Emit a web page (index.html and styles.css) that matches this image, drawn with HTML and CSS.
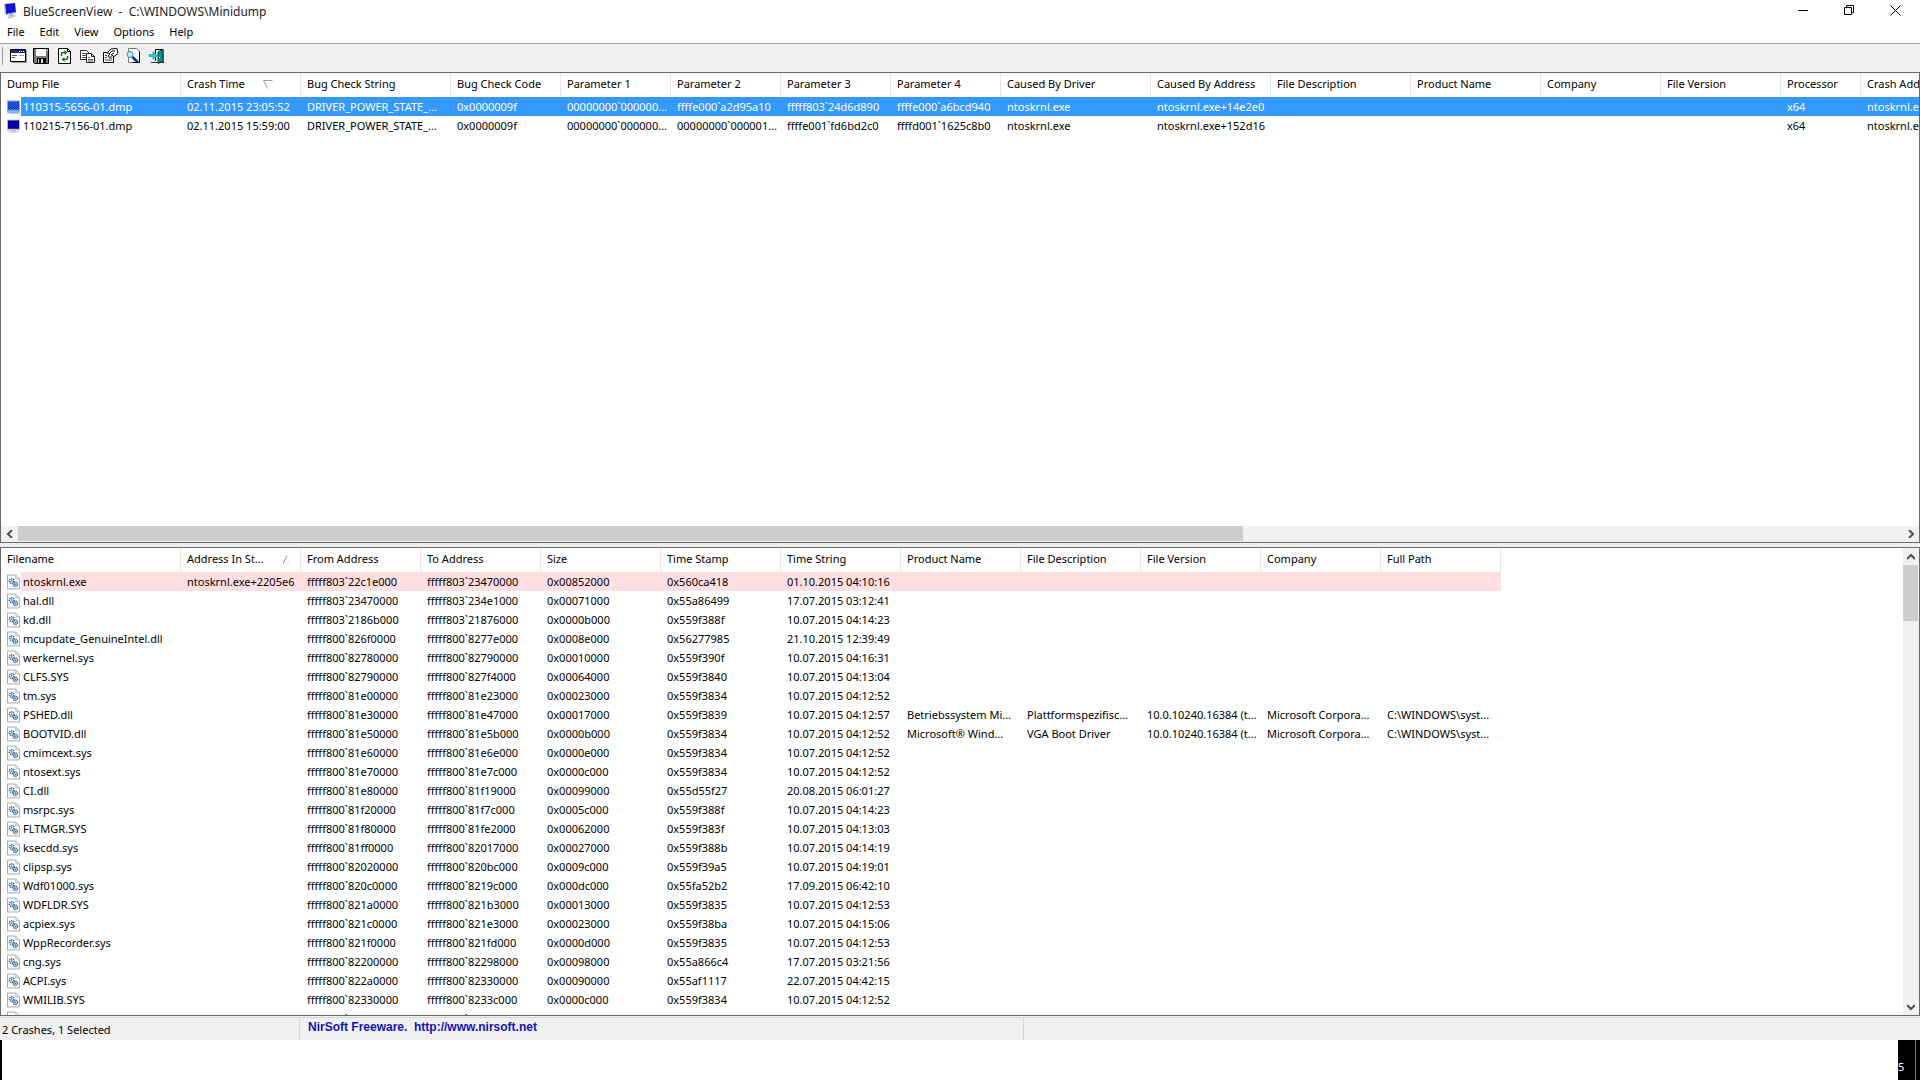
FILE: index.html
```html
<!DOCTYPE html>
<html lang="en">
<head>
<meta charset="utf-8">
<title>BlueScreenView - C:\WINDOWS\Minidump</title>
<link rel="stylesheet" href="styles.css">
</head>
<body>
<svg class="sprite" aria-hidden="true">
  <defs>
    <pattern id="dither" width="2" height="2" patternUnits="userSpaceOnUse"><path d="M0 0h1v1h-1zM1 1h1v1h-1z" fill="#39f"/></pattern>
    <symbol id="monitor" viewBox="0 0 14 16">
      <path d="M0 1h14v12H0z" fill="#c4c6cc"/><path d="M1 2h12v9H1z" fill="#00009c"/>
      <path d="M5 13h4v1H5z" fill="#9a9ca2"/><path d="M2 14h10v1H2z" fill="#b8bac0"/>
    </symbol>
    <symbol id="dll" viewBox="0 0 14 16">
      <path d="M.5.5h9l4 4v11H.5z" fill="#fbfcfd" stroke="#a3a3a3"/><path d="M9.500.5v4h4" fill="#e4e4e4" stroke="#b9b9b9"/>
      <circle cx="5" cy="7" r="2.500" fill="#dbe8f4" stroke="#3a6d9e" stroke-width="1.500" stroke-dasharray="1.300 .7"/><circle cx="5" cy="7" r=".8" fill="#3a6d9e"/>
      <circle cx="9" cy="10.500" r="2.300" fill="#dbe8f4" stroke="#2f6191" stroke-width="1.500" stroke-dasharray="1.300 .7"/><circle cx="9" cy="10.500" r=".8" fill="#2f6191"/>
    </symbol>
  </defs>
</svg>

<header class="titlebar">
  <svg class="app-icon" viewBox="0 0 16 16"><path d="M3 1l10-1 1 9-10 2z" fill="#1212d8"/><path d="M2 2l1-1 1 10-1 1z" fill="#b4b6cc"/><path d="M4 11l10-2v1l-9 2z" fill="#8e92c4"/><path d="M7 12l4-1 1 2-4 1z" fill="#a8aab4"/><path d="M5 14l8-2 1 1-7 3z" fill="#c4c6cc"/></svg>
  <h1>BlueScreenView  -  C:\WINDOWS\Minidump</h1>
  <div class="window-buttons">
    <button aria-label="Minimize"><svg viewBox="0 0 11 11"><path d="M0 5.500h10" stroke="#000"/></svg></button>
    <button aria-label="Restore"><svg viewBox="0 0 11 11"><path d="M.5 2.500h7v7h-7zM2.500 2.500v-2h7v7h-2" fill="none" stroke="#000"/></svg></button>
    <button aria-label="Close"><svg viewBox="0 0 11 11"><path d="M.5.5l10 10M10.500.5l-10 10" stroke="#000"/></svg></button>
  </div>
</header>

<nav class="menubar">
  <button>File</button><button>Edit</button><button>View</button><button>Options</button><button>Help</button>
</nav>

<div class="toolbar" role="toolbar">
  <button aria-label="Advanced options"><svg viewBox="0 0 17 16"><path d="M.5 1.500h15v12H.5z" fill="#fff" stroke="#000"/><path d="M1 2h14v3H1z" fill="#23238a"/><path d="M9 3h1v1H9zM11 3h1v1h-1zM13 3h1v1h-1z" fill="#fff"/><path d="M2 7.500h5M2 9.500h3" stroke="#555"/><path d="M9 7.500h5" stroke="#999"/><path d="M16.500 3v12M2 14.500h15" stroke="#999"/></svg></button>
  <button aria-label="Save"><svg viewBox="0 0 17 16"><path d="M.5.5h15v15h-14l-1-1z" fill="#777" stroke="#000"/><path d="M3 1h10v7H3z" fill="#fff"/><path d="M4 10h9v5H4z" fill="#000"/><path d="M5 11h5v4H5z" fill="#ddd"/><path d="M6 11h2v4H6z" fill="#000"/><path d="M14 2h1v1h-1z" fill="#fff"/></svg></button>
  <button aria-label="Refresh"><svg viewBox="0 0 17 16"><path d="M2.500.5h9l3 3v12h-12z" fill="#fff" stroke="#000"/><path d="M11.500.5v3h3" fill="none" stroke="#000"/><path d="M5.500 8V6q0-1.500 2-1.500h2M11.500 8v2q0 1.500-2 1.500h-2" fill="none" stroke="#087a18" stroke-width="1.500"/><path d="M8.500 2l3 2.500-3 2.500zM8.500 9l-3 2.500 3 2.500z" fill="#087a18"/></svg></button>
  <button aria-label="Copy"><svg viewBox="0 0 17 16"><path d="M1.500 2.500h6l3 3v6h-9z" fill="#fff" stroke="#333"/><path d="M3 5.500h4M3 7.500h4M3 9.500h4" stroke="#555"/><path d="M7.500 5.500h5l3 3v6h-8z" fill="#fff" stroke="#222"/><path d="M12.500 5.500v3h3" fill="none" stroke="#222"/><path d="M9 9.500h2M9 11.500h5M9 13h5" stroke="#555"/></svg></button>
  <button aria-label="Properties"><svg viewBox="0 0 17 16"><path d="M1.500 4.500h10v10h-10z" fill="#fff" stroke="#000"/><path d="M5 5l4-4 6-.5 1 5-4 3-2-1-2 2-2-1 2-3z" fill="#fff" stroke="#000"/><path d="M7 6l3-3h3M9 7l3-2" fill="none" stroke="#000"/><path d="M3 7.500h2M3 9.500h2M7 10h3M3 12h7" stroke="#333"/></svg></button>
  <button aria-label="Find"><svg viewBox="0 0 17 16"><path d="M3.500.5h8l3 3v11h-11z" fill="#fff" stroke="#777"/><path d="M14.500 3.500v11h-7" fill="none" stroke="#000"/><circle cx="5" cy="6.500" r="3" fill="#aef2f2" stroke="#498b9e"/><path d="M7.500 9l5.500 5.500" stroke="#0b2c9c" stroke-width="2.500"/></svg></button>
  <button aria-label="Exit"><svg viewBox="0 0 17 16"><path d="M7.500 13V1.500h7.500V14" fill="#fff" stroke="#000"/><path d="M10 4l5-2.500V13l-5 2.500z" fill="#128a8a" stroke="#063f3f"/><path d="M11 9h1v1h-1z" fill="#fff"/><path d="M1 6.500h4V3.500l4.500 4-4.500 4v-3H1z" fill="#17cfd6" stroke="#0c8f98" stroke-width=".6"/><path d="M3 14.500h13" stroke="#333"/></svg></button>
</div>

<main class="panes">
<section class="pane pane-crashes">
  <div class="list">
  <table class="crashes">
    <colgroup><col class="w180"><col class="w120"><col class="w150"><col class="w110"><col class="w110"><col class="w110"><col class="w110"><col class="w110"><col class="w150"><col class="w120"><col class="w140"><col class="w130"><col class="w120"><col class="w120"><col class="w80"><col class="w120"></colgroup>
    <thead><tr><th>Dump File<th><div class="sorted">Crash Time <svg viewBox="0 0 10 9"><path d="M9.500.5H.5l4 8" fill="none" stroke="#a0a0a0"/></svg></div><th>Bug Check String<th>Bug Check Code<th>Parameter 1<th>Parameter 2<th>Parameter 3<th>Parameter 4<th>Caused By Driver<th>Caused By Address<th>File Description<th>Product Name<th>Company<th>File Version<th>Processor<th>Crash Address</tr></thead>
    <tbody>
    <tr class="selected"><td><div class="name"><svg viewBox="0 0 14 16"><use href="#monitor"/><path d="M0 1h14v14H0z" fill="url(#dither)"/></svg>110315-5656-01.dmp</div><td>02.11.2015 23:05:52<td>DRIVER_POWER_STATE_...<td>0x0000009f<td>00000000`000000...<td>ffffe000`a2d95a10<td>fffff803`24d6d890<td>ffffe000`a6bcd940<td>ntoskrnl.exe<td>ntoskrnl.exe+14e2e0<td><td><td><td><td>x64<td>ntoskrnl.exe+14e2e0</tr>
    <tr><td><div class="name"><svg><use href="#monitor"/></svg>110215-7156-01.dmp</div><td>02.11.2015 15:59:00<td>DRIVER_POWER_STATE_...<td>0x0000009f<td>00000000`000000...<td>00000000`000001...<td>ffffe001`fd6bd2c0<td>ffffd001`1625c8b0<td>ntoskrnl.exe<td>ntoskrnl.exe+152d16<td><td><td><td><td>x64<td>ntoskrnl.exe+152d16</tr>
    </tbody>
  </table>
  </div>
  <div class="hscroll">
    <button aria-label="Scroll left"><svg viewBox="0 0 8 8"><path d="M6 0L2 4l4 4" fill="none" stroke="#505050" stroke-width="2"/></svg></button>
    <div class="track"><div class="thumb"></div></div>
    <button aria-label="Scroll right"><svg viewBox="0 0 8 8"><path d="M2 0l4 4-4 4" fill="none" stroke="#505050" stroke-width="2"/></svg></button>
  </div>
</section>

<section class="pane pane-drivers">
  <div class="list">
  <table class="drivers">
    <colgroup><col class="w180"><col class="w120" span="11"></colgroup>
    <thead><tr><th>Filename<th><div class="sorted">Address In St... <svg viewBox="0 0 10 9"><path d="M3 8.500L7 .5" fill="none" stroke="#909090"/><path d="M7 1l2 7H4" fill="none" stroke="#eee"/></svg></div><th>From Address<th>To Address<th>Size<th>Time Stamp<th>Time String<th>Product Name<th>File Description<th>File Version<th>Company<th>Full Path</tr></thead>
    <tbody>
    <tr class="in-stack"><td><div class="name"><svg><use href="#dll"/></svg>ntoskrnl.exe</div><td>ntoskrnl.exe+2205e6<td>fffff803`22c1e000<td>fffff803`23470000<td>0x00852000<td>0x560ca418<td>01.10.2015 04:10:16<td><td><td><td><td></tr>
    <tr><td><div class="name"><svg><use href="#dll"/></svg>hal.dll</div><td><td>fffff803`23470000<td>fffff803`234e1000<td>0x00071000<td>0x55a86499<td>17.07.2015 03:12:41<td><td><td><td><td></tr>
    <tr><td><div class="name"><svg><use href="#dll"/></svg>kd.dll</div><td><td>fffff803`2186b000<td>fffff803`21876000<td>0x0000b000<td>0x559f388f<td>10.07.2015 04:14:23<td><td><td><td><td></tr>
    <tr><td><div class="name"><svg><use href="#dll"/></svg>mcupdate_GenuineIntel.dll</div><td><td>fffff800`826f0000<td>fffff800`8277e000<td>0x0008e000<td>0x56277985<td>21.10.2015 12:39:49<td><td><td><td><td></tr>
    <tr><td><div class="name"><svg><use href="#dll"/></svg>werkernel.sys</div><td><td>fffff800`82780000<td>fffff800`82790000<td>0x00010000<td>0x559f390f<td>10.07.2015 04:16:31<td><td><td><td><td></tr>
    <tr><td><div class="name"><svg><use href="#dll"/></svg>CLFS.SYS</div><td><td>fffff800`82790000<td>fffff800`827f4000<td>0x00064000<td>0x559f3840<td>10.07.2015 04:13:04<td><td><td><td><td></tr>
    <tr><td><div class="name"><svg><use href="#dll"/></svg>tm.sys</div><td><td>fffff800`81e00000<td>fffff800`81e23000<td>0x00023000<td>0x559f3834<td>10.07.2015 04:12:52<td><td><td><td><td></tr>
    <tr><td><div class="name"><svg><use href="#dll"/></svg>PSHED.dll</div><td><td>fffff800`81e30000<td>fffff800`81e47000<td>0x00017000<td>0x559f3839<td>10.07.2015 04:12:57<td>Betriebssystem Mi...<td>Plattformspezifisc...<td>10.0.10240.16384 (t...<td>Microsoft Corpora...<td>C:\WINDOWS\syst...</tr>
    <tr><td><div class="name"><svg><use href="#dll"/></svg>BOOTVID.dll</div><td><td>fffff800`81e50000<td>fffff800`81e5b000<td>0x0000b000<td>0x559f3834<td>10.07.2015 04:12:52<td>Microsoft® Wind...<td>VGA Boot Driver<td>10.0.10240.16384 (t...<td>Microsoft Corpora...<td>C:\WINDOWS\syst...</tr>
    <tr><td><div class="name"><svg><use href="#dll"/></svg>cmimcext.sys</div><td><td>fffff800`81e60000<td>fffff800`81e6e000<td>0x0000e000<td>0x559f3834<td>10.07.2015 04:12:52<td><td><td><td><td></tr>
    <tr><td><div class="name"><svg><use href="#dll"/></svg>ntosext.sys</div><td><td>fffff800`81e70000<td>fffff800`81e7c000<td>0x0000c000<td>0x559f3834<td>10.07.2015 04:12:52<td><td><td><td><td></tr>
    <tr><td><div class="name"><svg><use href="#dll"/></svg>CI.dll</div><td><td>fffff800`81e80000<td>fffff800`81f19000<td>0x00099000<td>0x55d55f27<td>20.08.2015 06:01:27<td><td><td><td><td></tr>
    <tr><td><div class="name"><svg><use href="#dll"/></svg>msrpc.sys</div><td><td>fffff800`81f20000<td>fffff800`81f7c000<td>0x0005c000<td>0x559f388f<td>10.07.2015 04:14:23<td><td><td><td><td></tr>
    <tr><td><div class="name"><svg><use href="#dll"/></svg>FLTMGR.SYS</div><td><td>fffff800`81f80000<td>fffff800`81fe2000<td>0x00062000<td>0x559f383f<td>10.07.2015 04:13:03<td><td><td><td><td></tr>
    <tr><td><div class="name"><svg><use href="#dll"/></svg>ksecdd.sys</div><td><td>fffff800`81ff0000<td>fffff800`82017000<td>0x00027000<td>0x559f388b<td>10.07.2015 04:14:19<td><td><td><td><td></tr>
    <tr><td><div class="name"><svg><use href="#dll"/></svg>clipsp.sys</div><td><td>fffff800`82020000<td>fffff800`820bc000<td>0x0009c000<td>0x559f39a5<td>10.07.2015 04:19:01<td><td><td><td><td></tr>
    <tr><td><div class="name"><svg><use href="#dll"/></svg>Wdf01000.sys</div><td><td>fffff800`820c0000<td>fffff800`8219c000<td>0x000dc000<td>0x55fa52b2<td>17.09.2015 06:42:10<td><td><td><td><td></tr>
    <tr><td><div class="name"><svg><use href="#dll"/></svg>WDFLDR.SYS</div><td><td>fffff800`821a0000<td>fffff800`821b3000<td>0x00013000<td>0x559f3835<td>10.07.2015 04:12:53<td><td><td><td><td></tr>
    <tr><td><div class="name"><svg><use href="#dll"/></svg>acpiex.sys</div><td><td>fffff800`821c0000<td>fffff800`821e3000<td>0x00023000<td>0x559f38ba<td>10.07.2015 04:15:06<td><td><td><td><td></tr>
    <tr><td><div class="name"><svg><use href="#dll"/></svg>WppRecorder.sys</div><td><td>fffff800`821f0000<td>fffff800`821fd000<td>0x0000d000<td>0x559f3835<td>10.07.2015 04:12:53<td><td><td><td><td></tr>
    <tr><td><div class="name"><svg><use href="#dll"/></svg>cng.sys</div><td><td>fffff800`82200000<td>fffff800`82298000<td>0x00098000<td>0x55a866c4<td>17.07.2015 03:21:56<td><td><td><td><td></tr>
    <tr><td><div class="name"><svg><use href="#dll"/></svg>ACPI.sys</div><td><td>fffff800`822a0000<td>fffff800`82330000<td>0x00090000<td>0x55af1117<td>22.07.2015 04:42:15<td><td><td><td><td></tr>
    <tr><td><div class="name"><svg><use href="#dll"/></svg>WMILIB.SYS</div><td><td>fffff800`82330000<td>fffff800`8233c000<td>0x0000c000<td>0x559f3834<td>10.07.2015 04:12:52<td><td><td><td><td></tr>
    <tr><td><div class="name"><svg><use href="#dll"/></svg>WindowsTrustedRT.sys</div><td><td>fffff800`82350000<td>fffff800`8236f000<td>0x0001f000<td>0x559f382a<td>10.07.2015 04:12:42<td><td><td><td><td></tr>
    </tbody>
  </table>
  </div>
  <div class="vscroll">
    <button aria-label="Scroll up"><svg viewBox="0 0 8 8"><path d="M0 6l4-4 4 4" fill="none" stroke="#505050" stroke-width="2"/></svg></button>
    <div class="track"><div class="thumb"></div></div>
    <button aria-label="Scroll down"><svg viewBox="0 0 8 8"><path d="M0 2l4 4 4-4" fill="none" stroke="#505050" stroke-width="2"/></svg></button>
  </div>
</section>
</main>

<footer class="statusbar">
  <span class="count">2 Crashes, 1 Selected</span>
  <span class="credit"><a href="http://www.nirsoft.net">NirSoft Freeware.  http://www.nirsoft.net</a></span>
</footer>
<div class="desktop"><div class="edge"></div><div class="clock">5</div></div>
</body>
</html>
```
FILE: styles.css
```css
* { box-sizing: border-box; }

body {
  margin: 0;
  height: 100vh;
  display: flex;
  flex-direction: column;
  overflow: hidden;
  background: #fff;
  color: #000;
  font: 11px/18px "Noto Sans", "Open Sans", sans-serif;
}

button {
  border: 0;
  padding: 0;
  background: none;
  color: inherit;
  font: inherit;
}

svg { display: block; }
.sprite { position: absolute; width: 0; height: 0; }

/* Title bar and menu */
.titlebar {
  display: flex;
  align-items: flex-start;
  height: 23px;
  padding: 0 2px;
}
.app-icon { width: 16px; height: 16px; margin-top: 3px; }
.titlebar h1 {
  flex: 1;
  margin: 2px 0 0 5px;
  font-size: 12px;
  line-height: 20px;
  font-weight: 400;
  white-space: pre;
  color: #222;
}
.window-buttons { display: flex; }
.window-buttons button {
  width: 46px;
  height: 21px;
  display: flex;
  align-items: center;
  justify-content: center;
}
.window-buttons svg { width: 11px; height: 11px; }

.menubar {
  height: 21px;
  display: flex;
  gap: 1px;
  border-bottom: 1px solid #a0a0a0;
}
.menubar button { padding: 0 7px; height: 18px; }

/* Toolbar */
.toolbar {
  display: flex;
  align-items: center;
  height: 28px;
  padding: 0 0 4px 7px;
  background: linear-gradient(#a0a0a0, #a0a0a0) 2px 3px / 1px 18px no-repeat #f0f0f0;
}
.toolbar button {
  width: 23px;
  height: 22px;
  display: flex;
  align-items: center;
  justify-content: center;
}
.toolbar svg { width: 17px; height: 16px; }

/* Panes */
.panes {
  flex: 1;
  min-height: 0;
  display: flex;
  flex-direction: column;
  gap: 4px;
  background: #f0f0f0;
}
.pane {
  display: flex;
  min-height: 0;
  border: 1px solid #696969;
  background: #fff;
}
.pane-crashes { flex: 471 1 0; flex-direction: column; }
.pane-drivers { flex: 469 1 0; }
.list { flex: 1; min-width: 0; min-height: 0; overflow: hidden; }

table { table-layout: fixed; border-collapse: collapse; }
.crashes { width: 1980px; }
.drivers { width: 1500px; }
.w80 { width: 80px; }
.w110 { width: 110px; }
.w120 { width: 120px; }
.w130 { width: 130px; }
.w140 { width: 140px; }
.w150 { width: 150px; }
.w180 { width: 180px; }

th, td {
  padding: 0 0 0 6px;
  text-align: left;
  font-weight: 400;
  white-space: nowrap;
}
th {
  height: 24px;
  padding-bottom: 2px;
  background: linear-gradient(#e5e5e5, #e5e5e5) right / 1px 100% no-repeat;
}
td { height: 19px; }
.sorted {
  display: flex;
  align-items: center;
  justify-content: space-between;
  padding-right: 28px;
}
.drivers .sorted { padding-right: 11px; }
.sorted svg { width: 10px; height: 9px; }

.name { display: flex; align-items: center; gap: 3px; height: 18px; }
.name svg { width: 13px; height: 16px; }

.selected { color: #fff; }
.selected td {
  background: repeating-linear-gradient(90deg, #a87a50 0 1px, #39f 1px 2px) top / 100% 1px no-repeat,
    repeating-linear-gradient(90deg, #a87a50 0 1px, #39f 1px 2px) bottom / 100% 1px no-repeat, #39f;
}
.in-stack td { background: #ffdfe1; }
.selected td:first-child,
.in-stack td:first-child { background-image: linear-gradient(90deg, #fff 20px, transparent 20px); background-size: auto; }

/* Scroll bars */
.hscroll, .vscroll { display: flex; background: #f0f0f0; }
.hscroll { height: 16px; }
.vscroll { width: 16px; flex-direction: column; }
.hscroll button, .vscroll button {
  display: flex;
  align-items: center;
  justify-content: center;
}
.hscroll button { width: 17px; }
.vscroll button { height: 17px; }
.hscroll svg, .vscroll svg { width: 8px; height: 8px; }
.track { flex: 1; }
.thumb { background: #cdcdcd; }
.hscroll .thumb { width: 65%; height: 15px; }
.vscroll .thumb { width: 15px; height: 56px; }

/* Status bar */
.statusbar {
  display: flex;
  height: 24px;
  padding-top: 2px;
  background: linear-gradient(#d7d7d7, #d7d7d7) 0 1px / 100% 1px no-repeat #f0f0f0;
}
.count { width: 300px; padding-left: 2px; border-right: 1px solid #d7d7d7; line-height: 24px; }
.credit { width: 724px; padding-left: 8px; border-right: 1px solid #d7d7d7; }
.credit a {
  font: bold 12px/16px "Liberation Sans", Arial, sans-serif;
  white-space: pre;
  color: #1414b4;
  text-decoration: none;
}

/* Desktop strip below the window */
.desktop {
  display: flex;
  justify-content: space-between;
  height: 40px;
}
.edge { width: 2px; background: #000; }
.clock {
  width: 22px;
  padding-top: 18px;
  background: linear-gradient(#777, #777) 17px 0 / 1px 100% no-repeat #000;
  color: #fff;
}
```
